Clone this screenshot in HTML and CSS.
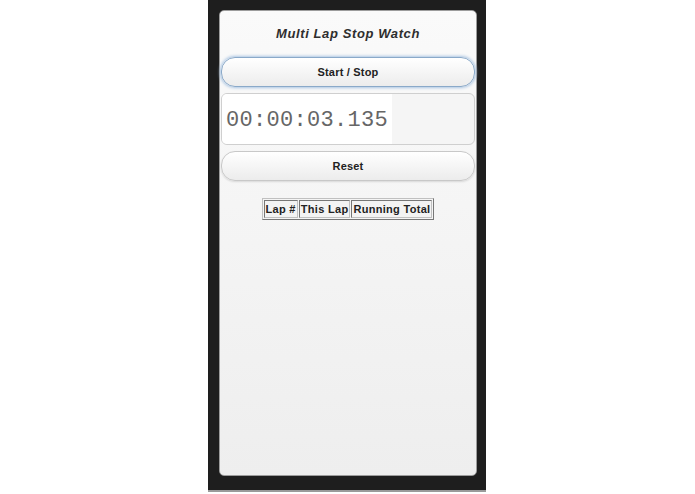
FILE: index.html
```html
<!DOCTYPE html>
<html lang="en">
<head>
    <meta charset="UTF-8">
    <meta name="viewport" content="width=device-width, initial-scale=1.0">
    <title>Multi Lap Stop Watch</title>
    <link rel="stylesheet" href="styles.css">
</head>
<body>
    <div class="device">
        <div class="page">
            <h2 class="title">Multi Lap Stop Watch</h2>
            <button class="btn btn-focus" id="startBtn">Start / Stop</button>
            <div class="display">
                <input type="text" id="timeField" class="time" value="00:00:03.135" readonly>
            </div>
            <button class="btn" id="resetBtn">Reset</button>
            <table class="laps" id="lapTable">
                <tr>
                    <th>Lap #</th>
                    <th>This Lap</th>
                    <th>Running Total</th>
                </tr>
            </table>
        </div>
    </div>
</body>
</html>
```

FILE: styles.css
```css
body {
    margin: 0;
    background-color: #fff;
    font-family: "Liberation Sans", Arial, sans-serif;
}
.device {
    width: 278px;
    height: 492px;
    margin-left: 208px;
    box-sizing: border-box;
    padding: 10px 9px 14px 11px;
    background-color: #1e1e1e;
    border-bottom: 2px solid #9a9a9a;
}
.page {
    height: 100%;
    box-sizing: border-box;
    padding: 0 1px;
    background: linear-gradient(#fafafa, #eeeeee);
    border: 1px solid #9c9c9c;
    border-radius: 5px;
    display: flex;
    flex-direction: column;
    align-items: center;
}
.title {
    margin: 0;
    height: 46px;
    line-height: 45px;
    font-size: 13px;
    font-style: italic;
    font-weight: bold;
    color: #2e2e2e;
    letter-spacing: 0.6px;
}
.btn {
    width: 100%;
    height: 30px;
    flex-shrink: 0;
    border: 1px solid #c8c8c8;
    border-radius: 14px;
    background: linear-gradient(#ffffff, #ececec);
    box-shadow: 0 1px 2px rgba(0, 0, 0, 0.12);
    font-family: "Liberation Sans", Arial, sans-serif;
    font-size: 11px;
    font-weight: bold;
    color: #222;
    letter-spacing: 0.2px;
}
.btn-focus {
    border-color: #8aa9c9;
    box-shadow: 0 0 3px 1px #a9c4e2;
}
.display {
    width: 100%;
    height: 52px;
    flex-shrink: 0;
    box-sizing: border-box;
    margin: 6px 0 6px;
    border: 1px solid #cfcfcf;
    border-radius: 6px;
    background-color: #f5f5f5;
    overflow: hidden;
}
.time {
    width: 170px;
    height: 100%;
    box-sizing: border-box;
    border: none;
    margin: 0;
    padding: 3px 0 0 4px;
    background-color: #fff;
    font-family: "Liberation Mono", "Courier New", monospace;
    font-size: 22px;
    letter-spacing: 0.3px;
    color: #666;
    outline: none;
}
.laps {
    margin-top: 17px;
    border: 1px solid #888;
    border-color: #c0c0c0 #777 #777 #c0c0c0;
    border-spacing: 1px;
}
.laps th {
    padding: 2px 1px;
    border: 1px solid #888;
    border-color: #777 #c0c0c0 #c0c0c0 #777;
    font-size: 11px;
    font-weight: bold;
    color: #222;
    letter-spacing: 0.3px;
    background-color: #f3f3f3;
}
```
